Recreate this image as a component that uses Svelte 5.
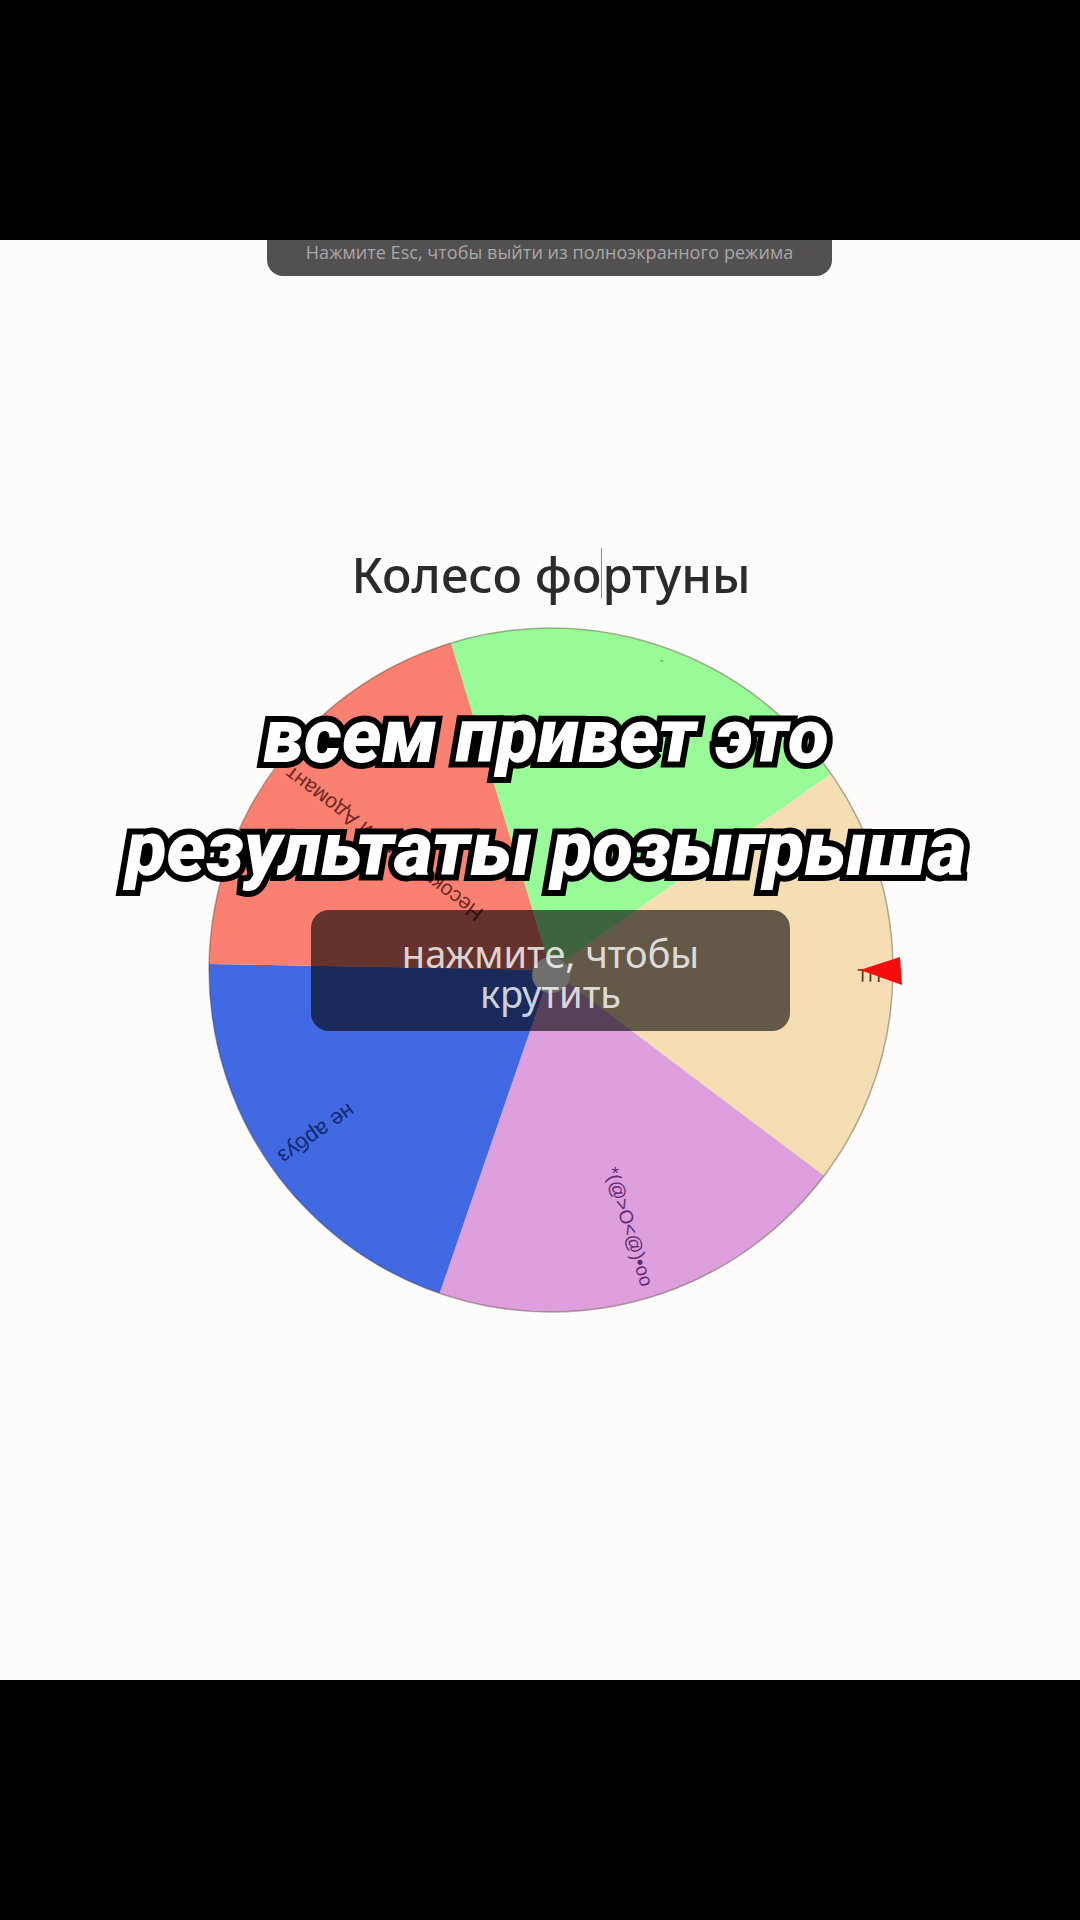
<script>
    const cx = 360;
    const cy = 360;
    const radius = 342;
    const turn = 1;

    const slices = [
        { color: "#f5deb3", label: "ТП", ink: "#4a4030", size: 18 },
        { color: "#dda0dd", label: "*(@>O<@)•oo", ink: "#5e2a72", size: 19 },
        { color: "#4169e1", label: "не арбуз", ink: "#14286e", size: 22 },
        { color: "#fa8072", label: "Несокрушимый Адомант", ink: "#6e2a24", size: 21 },
        { color: "#98fb98", label: ",", ink: "#3f8a3f", size: 12 }
    ];

    function point(deg, r) {
        const a = (deg * Math.PI) / 180;
        return `${cx + r * Math.cos(a)} ${cy + r * Math.sin(a)}`;
    }

    function wedge(i) {
        const from = -36 + i * 72 + turn;
        const to = from + 72;
        return `M${cx} ${cy} L${point(from, radius)} A${radius} ${radius} 0 0 1 ${point(to, radius)} Z`;
    }
</script>

<div class="page">
    <div class="band"></div>

    <main class="stage">
        <div class="toast">Нажмите Esc, чтобы выйти из полноэкранного режима</div>

        <h1 class="title">Колесо фо<span class="caret"></span>ртуны</h1>

        <div class="wheel">
            <svg width="720" height="720" viewBox="0 0 720 720">
                {#each slices as slice, i}
                    <path d={wedge(i)} fill={slice.color} />
                {/each}
                <circle {cx} {cy} r={radius} class="rim" />
                {#each slices as slice, i}
                    <text
                        x={cx + 330}
                        y={cy}
                        dy="0.35em"
                        text-anchor="end"
                        fill={slice.ink}
                        font-size={slice.size}
                        transform="rotate({i * 72 + turn} {cx} {cy})">{slice.label}</text>
                {/each}
                <polygon points="669,360 709,347 711,375" fill="#f60c0c" />
            </svg>

            <button class="spin">
                <span class="hub"></span>
                <span class="spin_text">нажмите, чтобы крутить</span>
            </button>
        </div>

        <div class="caption">
            <p>всем привет это</p>
            <p>результаты розыгрыша</p>
        </div>
    </main>

    <div class="band"></div>
</div>

<style>
    :global(body) {
        background-color: #000;
    }

    .page {
        display: flex;
        flex-direction: column;
        width: 1080px;
        height: 1920px;
        overflow: hidden;
    }

    .band {
        height: 240px;
        background-color: #000;
    }

    .stage {
        position: relative;
        display: flex;
        flex-direction: column;
        align-items: center;
        height: 1440px;
        padding-top: 302px;
        box-sizing: border-box;
        background-color: #fefcfb;
    }

    .toast {
        position: absolute;
        top: 0;
        left: 267px;
        width: 565px;
        height: 36px;
        display: flex;
        justify-content: center;
        align-items: center;
        padding-bottom: 13px;
        box-sizing: border-box;
        background-color: #525050;
        border-radius: 0 0 16px 16px;
        color: #a8a8a8;
        font-family: "Open Sans", sans-serif;
        font-size: 18px;
        letter-spacing: 0.05px;
        white-space: nowrap;
    }

    .title {
        margin: 0 0 0 22px;
        height: 64px;
        font-family: "Noto Sans", sans-serif;
        font-size: 49px;
        font-weight: 500;
        line-height: 64px;
        color: #2b2b2b;
    }

    .caret {
        display: inline-block;
        width: 1px;
        height: 50px;
        margin-bottom: -5px;
        background-color: #8a8a8a;
    }

    .wheel {
        position: relative;
        width: 720px;
        height: 720px;
        margin: 4px 0 0 22px;
    }

    .wheel svg {
        display: block;
    }

    .wheel text {
        font-family: "Liberation Sans", sans-serif;
    }

    .rim {
        fill: none;
        stroke: rgba(70, 60, 40, 0.4);
        stroke-width: 1.5;
    }

    .spin {
        position: absolute;
        top: 300px;
        left: 120px;
        width: 479px;
        height: 121px;
        display: flex;
        justify-content: center;
        align-items: center;
        padding: 5px 80px 0;
        border: none;
        border-radius: 18px;
        background-color: rgba(0, 0, 0, 0.6);
    }

    .hub {
        position: absolute;
        top: 47px;
        left: 221px;
        width: 38px;
        height: 36px;
        border-radius: 50%;
        background-color: #6e6e6c;
    }

    .spin_text {
        position: relative;
        font-family: "Noto Sans", sans-serif;
        font-size: 38px;
        line-height: 40px;
        color: rgba(255, 255, 255, 0.8);
    }

    .caption {
        position: absolute;
        top: 440px;
        left: 0;
        right: -12px;
        font-family: "Roboto", "Liberation Sans", sans-serif;
        font-size: 75px;
        font-style: italic;
        font-weight: 900;
        line-height: 113px;
        text-align: center;
        color: #fff;
        -webkit-text-stroke: 12px #000;
        paint-order: stroke fill;
        text-shadow: 3px 4px 0 #000;
    }

    .caption p {
        margin: 0;
    }
</style>
